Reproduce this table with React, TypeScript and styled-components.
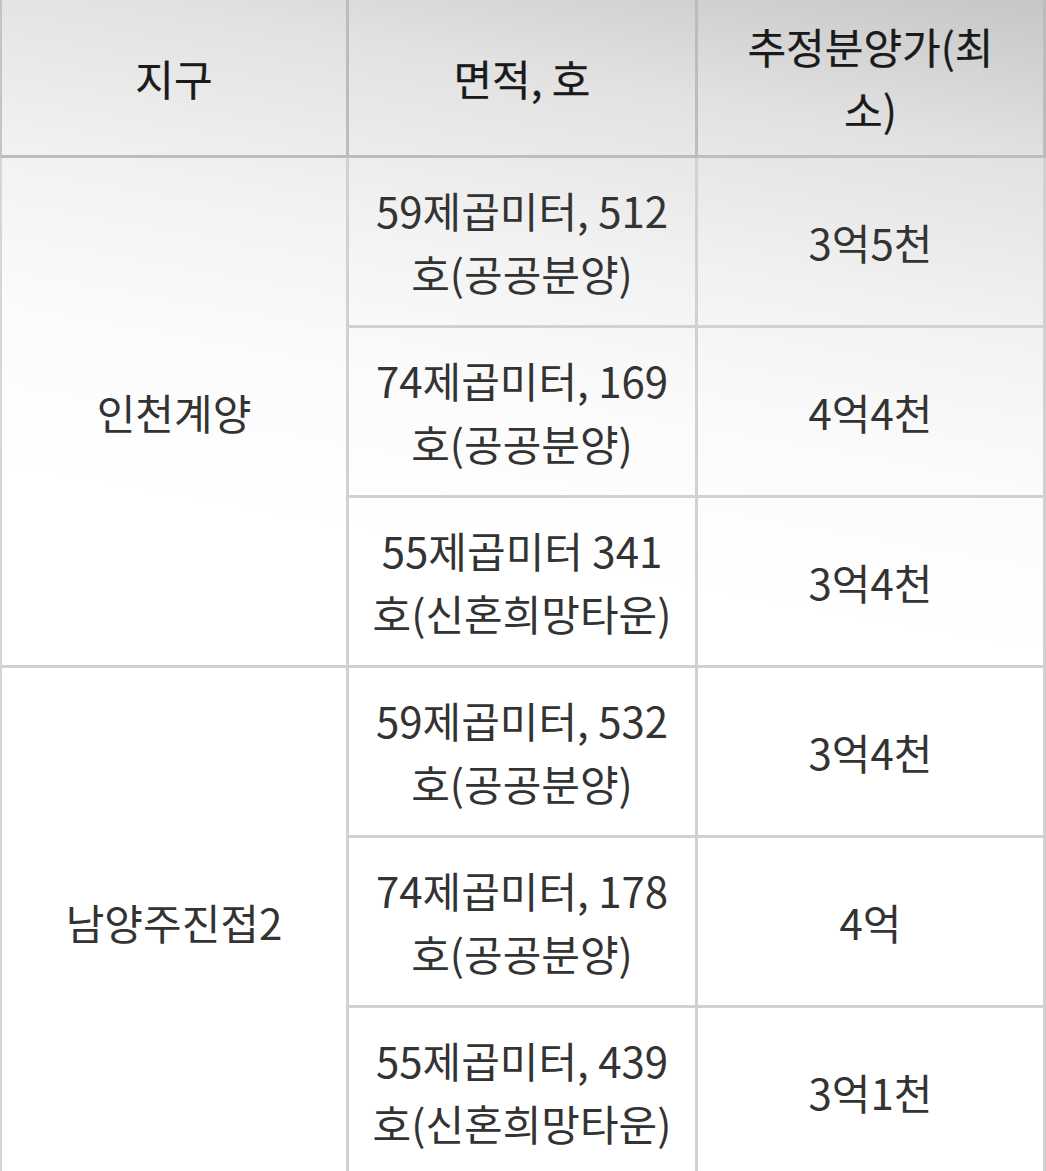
import styled, { createGlobalStyle } from 'styled-components';

const GlobalStyle = createGlobalStyle`
  html, body {
    margin: 0;
    padding: 0;
    overflow: hidden;
    background: #fff;
  }
  body {
    font-family: "Noto Sans CJK KR", "Noto Sans", sans-serif;
  }
`;

interface Unit {
  area: string;
  price: string;
}

interface District {
  name: string;
  units: Unit[];
}

const districts: District[] = [
  {
    name: '인천계양',
    units: [
      { area: '59제곱미터, 512호(공공분양)', price: '3억5천' },
      { area: '74제곱미터, 169호(공공분양)', price: '4억4천' },
      { area: '55제곱미터 341호(신혼희망타운)', price: '3억4천' },
    ],
  },
  {
    name: '남양주진접2',
    units: [
      { area: '59제곱미터, 532호(공공분양)', price: '3억4천' },
      { area: '74제곱미터, 178호(공공분양)', price: '4억' },
      { area: '55제곱미터, 439호(신혼희망타운)', price: '3억1천' },
    ],
  },
];

const Table = styled.table`
  width: 1046px;
  table-layout: fixed;
  border-collapse: separate;
  border-spacing: 0;
  background: linear-gradient(
    190deg,
    #c6c6c6 0px,
    #e2e2e2 160px,
    #f2f2f2 330px,
    #fbfbfb 480px,
    #ffffff 640px
  );
  background-repeat: no-repeat;
`;

const HeadCell = styled.th<{ $first?: boolean }>`
  padding: 14px 30px 15px;
  border-right: 3px solid #bcbcbc;
  border-bottom: 3px solid #bdbdbd;
  border-left: ${(p) => (p.$first ? '2px solid #c4c4c4' : 'none')};
  font-size: 42px;
  line-height: 63px;
  font-weight: 400;
  color: #1a1a1a;
  -webkit-text-stroke: 0.25px #1a1a1a;
  text-align: center;
  vertical-align: middle;
`;

const Cell = styled.td<{ $first?: boolean }>`
  padding: 20px 18px 21px;
  border-right: 3px solid #d1d1d1;
  border-bottom: 3px solid #d1d1d1;
  border-left: ${(p) => (p.$first ? '2px solid #d6d6d6' : 'none')};
  font-size: 42px;
  line-height: 63px;
  font-weight: 400;
  color: #333;
  text-align: center;
  vertical-align: middle;
`;

export default function App() {
  return (
    <>
      <GlobalStyle />
      <Table>
        <colgroup>
          <col style={{ width: 349 }} />
          <col style={{ width: 349 }} />
          <col style={{ width: 348 }} />
        </colgroup>
        <thead>
          <tr>
            <HeadCell $first>지구</HeadCell>
            <HeadCell>면적, 호</HeadCell>
            <HeadCell>추정분양가(최소)</HeadCell>
          </tr>
        </thead>
        <tbody>
          {districts.map((d) =>
            d.units.map((u, i) => (
              <tr key={d.name + i}>
                {i === 0 && (
                  <Cell $first rowSpan={d.units.length}>
                    {d.name}
                  </Cell>
                )}
                <Cell>{u.area}</Cell>
                <Cell>{u.price}</Cell>
              </tr>
            ))
          )}
        </tbody>
      </Table>
    </>
  );
}
